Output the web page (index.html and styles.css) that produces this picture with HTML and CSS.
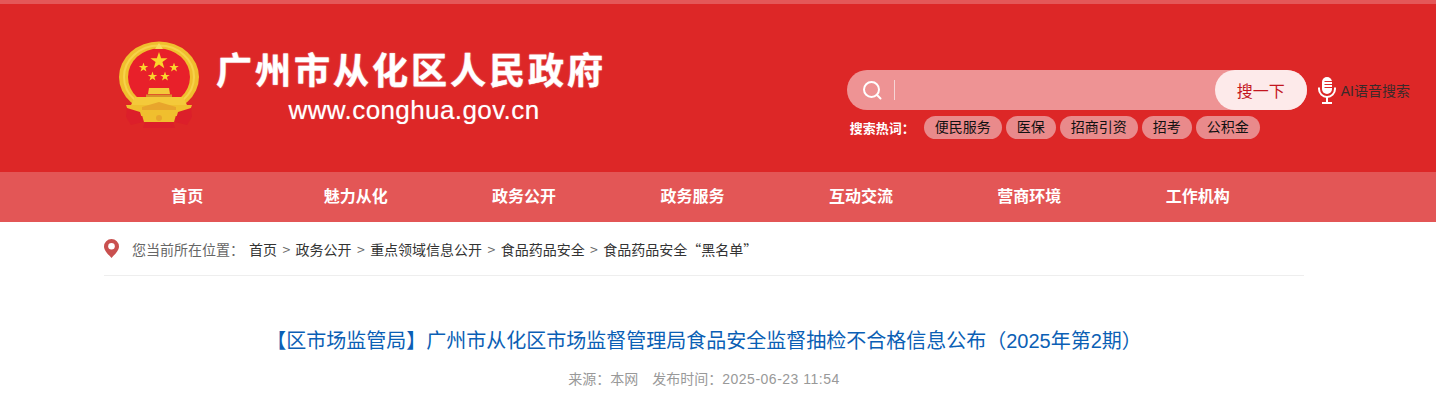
FILE: index.html
```html
<!DOCTYPE html>
<html lang="zh-CN">
<head>
  <meta charset="UTF-8" />
  <title>广州市从化区人民政府</title>
  <link rel="stylesheet" href="styles.css">
</head>
<body>
  <svg width="0" height="0" class="defs">
    <symbol id="star" viewBox="-10 -10 20 20">
      <polygon points="0,-10 2.35,-3.1 9.5,-3.1 3.8,1.2 5.9,8.1 0,4 -5.9,8.1 -3.8,1.2 -9.5,-3.1 -2.35,-3.1" fill="#fbd62c"/>
    </symbol>
  </svg>

  <!-- HEADER -->
  <header class="header">
    <div class="header-inner">
      <a class="logo" href="#">
        <svg class="emblem" width="82" height="88" viewBox="0 0 82 88">
          <!-- wreath -->
          <ellipse cx="41" cy="36" rx="40" ry="35.500" fill="#f0bf2e"/>
          <ellipse cx="41" cy="36" rx="35" ry="31.500" fill="none" stroke="#f7d24a" stroke-width="2"/>
          <ellipse cx="41" cy="36" rx="31" ry="28.500" fill="#e8202a"/>
          <path d="M37 8 L41 2 L45 8 Z" fill="#f8dc5c"/>
          <!-- stars -->
          <use href="#star" x="32" y="11" width="18" height="18"/>
          <use href="#star" x="20.500" y="21.500" width="10" height="10"/>
          <use href="#star" x="51" y="21.500" width="10" height="10"/>
          <use href="#star" x="29.500" y="30.500" width="10" height="10"/>
          <use href="#star" x="42" y="30.500" width="10" height="10"/>
          <!-- gate -->
          <path d="M31 47 H51 L52 53 H30 Z" fill="#f4c93a"/>
          <path d="M28 53.500 H54 V56 H28 Z" fill="#d9902a"/>
          <path d="M17 56 H65 L69 64 H13 Z" fill="#f4c93a"/>
          <path d="M8 64 H74 L70 75 H12 Z" fill="#f0bf2e"/>
          <path d="M24 66 L41 61 L58 66 L58 69 L24 69 Z" fill="#e8a52c"/>
          <!-- ribbons -->
          <path d="M9 67 L22 71 L25 81 L13 84 L8 76 Z M73 67 L60 71 L57 81 L69 84 L74 76 Z" fill="#dc1f2a"/>
          <path d="M24 74 Q32 71 41 75 Q50 71 58 74 L56 81 H26 Z" fill="#f0bf2e"/>
          <circle cx="41" cy="77" r="3" fill="#e8a52c"/>
          <path d="M27 81 H55 L57 87 H25 Z" fill="#dc1f2a"/>
        </svg>
        <div class="logo-text">
          <div class="logo-name">广州市从化区人民政府</div>
          <div class="logo-url">www.conghua.gov.cn</div>
        </div>
      </a>

      <div class="search-area">
        <div class="search-row">
          <div class="search-box">
            <svg class="search-icon" width="20" height="20" viewBox="0 0 20 20" fill="none" stroke="#fff" stroke-width="2">
              <circle cx="9.500" cy="9.500" r="7.500"/>
              <path d="M15 15 L18.500 18.500" stroke-linecap="round"/>
            </svg>
            <span class="caret"></span>
            <button class="search-btn">搜一下</button>
          </div>
          <a class="voice" href="#">
            <svg width="18" height="27" viewBox="0 0 18 27">
              <rect x="4" y="0" width="10" height="17" rx="5" fill="#fff"/>
              <path d="M6.500 4.500 H14 M6.500 7.500 H14 M6.500 10.500 H14" stroke="#dd2727" stroke-width="1.200"/>
              <path d="M1 10.500 V12 A8 8 0 0 0 17 12 V10.500" fill="none" stroke="#fff" stroke-width="2"/>
              <path d="M9 20 V26 M4 26 H14" stroke="#fff" stroke-width="2"/>
            </svg>
            <span>AI语音搜索</span>
          </a>
        </div>
        <div class="hot-row">
          <span class="hot-label">搜索热词：</span>
          <a class="hot-tag" href="#">便民服务</a>
          <a class="hot-tag" href="#">医保</a>
          <a class="hot-tag" href="#">招商引资</a>
          <a class="hot-tag" href="#">招考</a>
          <a class="hot-tag" href="#">公积金</a>
        </div>
      </div>
    </div>
  </header>

  <!-- NAV -->
  <nav class="nav">
    <div class="nav-inner">
      <a href="#">首页</a>
      <a href="#">魅力从化</a>
      <a href="#">政务公开</a>
      <a href="#">政务服务</a>
      <a href="#">互动交流</a>
      <a href="#">营商环境</a>
      <a href="#">工作机构</a>
    </div>
  </nav>

  <!-- CONTENT -->
  <main class="main">
    <div class="crumbs">
      <svg class="pin" width="15" height="19" viewBox="0 0 15 19">
        <path d="M7.500 0 A7.500 7.500 0 0 1 15 7.500 C15 12 10 16 7.500 19 C5 16 0 12 0 7.500 A7.500 7.500 0 0 1 7.500 0 Z" fill="#c9504f"/>
        <circle cx="7.500" cy="7.200" r="3.300" fill="#fff"/>
      </svg>
      <span class="crumbs-label">您当前所在位置：</span>
      <a href="#">首页</a><i>&gt;</i>
      <a href="#">政务公开</a><i>&gt;</i>
      <a href="#">重点领域信息公开</a><i>&gt;</i>
      <a href="#">食品药品安全</a><i>&gt;</i>
      <a href="#">食品药品安全“黑名单”</a>
    </div>
    <h1 class="title">【区市场监管局】广州市从化区市场监督管理局食品安全监督抽检不合格信息公布（2025年第2期）</h1>
    <div class="meta">
      <span>来源：本网</span>
      <span>发布时间：<span class="meta-date">2025-06-23 11:54</span></span>
    </div>
  </main>
</body>
</html>
```

FILE: styles.css
```css
* {margin: 0; padding: 0; box-sizing: border-box;}
html, body {height: 404px; overflow: hidden;}
body {
  font-family: "Liberation Sans", "Noto Sans CJK SC", sans-serif;
  background: #fff;
  color: #333;
}
a {color: inherit; text-decoration: none;}
.defs {position: absolute;}

/* Header */
.header {
  height: 172px;
  background: #dd2727;
  border-top: 4px solid #e45758;
}
.header-inner {
  display: flex;
  justify-content: space-between;
  height: 168px;
  padding: 37px 26px 0 118px;
}
.logo {display: flex; align-items: flex-start; gap: 16px;}
.logo-text {display: flex; flex-direction: column; align-items: center; color: #fff;}
.logo-name {
  font-family: "Noto Sans CJK SC", sans-serif;
  font-size: 36px; font-weight: 700; line-height: 56px;
  letter-spacing: 3px;
  margin-top: -1px;
  -webkit-text-stroke: 0.4px #fff;
  text-shadow: 0 0 2px rgba(255,255,255,0.5);
}
.logo-url {
  font-size: 26px; line-height: 30px; letter-spacing: 0.4px;
  margin: -1px 0 0 6px;
  text-shadow: 0 0 1px rgba(255,255,255,0.5);
}

/* Search */
.search-area {padding-top: 29px;}
.search-row {display: flex; align-items: center; gap: 11px;}
.search-box {
  width: 460px; height: 40px;
  background: #ee9394;
  border-radius: 20px;
  display: flex; align-items: center;
  padding-left: 15px;
}
.caret {width: 1px; height: 20px; background: #f6d5d5; margin-left: 12px;}
.search-btn {
  margin-left: auto;
  width: 92px; height: 40px;
  border: none; border-radius: 20px;
  background: #fdeaea;
  color: #c3161f;
  font-family: inherit; font-size: 16px;
}
.voice {display: flex; align-items: center; gap: 5px; font-size: 14px; color: #3a2a2a;}
.hot-row {display: flex; align-items: center; gap: 4px; margin-top: 6px; padding-left: 3px;}
.hot-label {color: #fff; font-size: 13px; font-weight: 700; width: 70px;}
.hot-tag {
  height: 23px; line-height: 23px;
  padding: 0 11px;
  border-radius: 12px;
  background: #e98a8b;
  color: #111;
  font-size: 14px;
}

/* Nav */
.nav {height: 50px; background: #e35656;}
.nav-inner {display: flex; width: 1179px; margin-left: 103px;}
.nav-inner a {
  flex: 1;
  text-align: center;
  line-height: 50px;
  color: #fff;
  font-size: 16px; font-weight: 700;
}

/* Content */
.main {width: 1200px; margin-left: 104px;}
.crumbs {
  display: flex; align-items: center;
  height: 54px;
  border-bottom: 1px solid #eee;
  font-family: "Noto Sans CJK SC", sans-serif;
  font-size: 14px;
  color: #333;
}
.pin {margin-right: 13px;}
.crumbs-label {color: #666; width: 117px;}
.crumbs i {font-style: normal; color: #666; margin: 0 5.400px;}
.title {
  margin-top: 50px;
  text-align: center;
  font-size: 20px; font-weight: 400; line-height: 30px;
  color: #0b5fb5;
}
.meta {
  display: flex; justify-content: center; gap: 14px;
  margin-top: 13px;
  font-size: 14px; line-height: 20px;
  color: #999;
}
.meta-date {letter-spacing: 0.5px;}
```
